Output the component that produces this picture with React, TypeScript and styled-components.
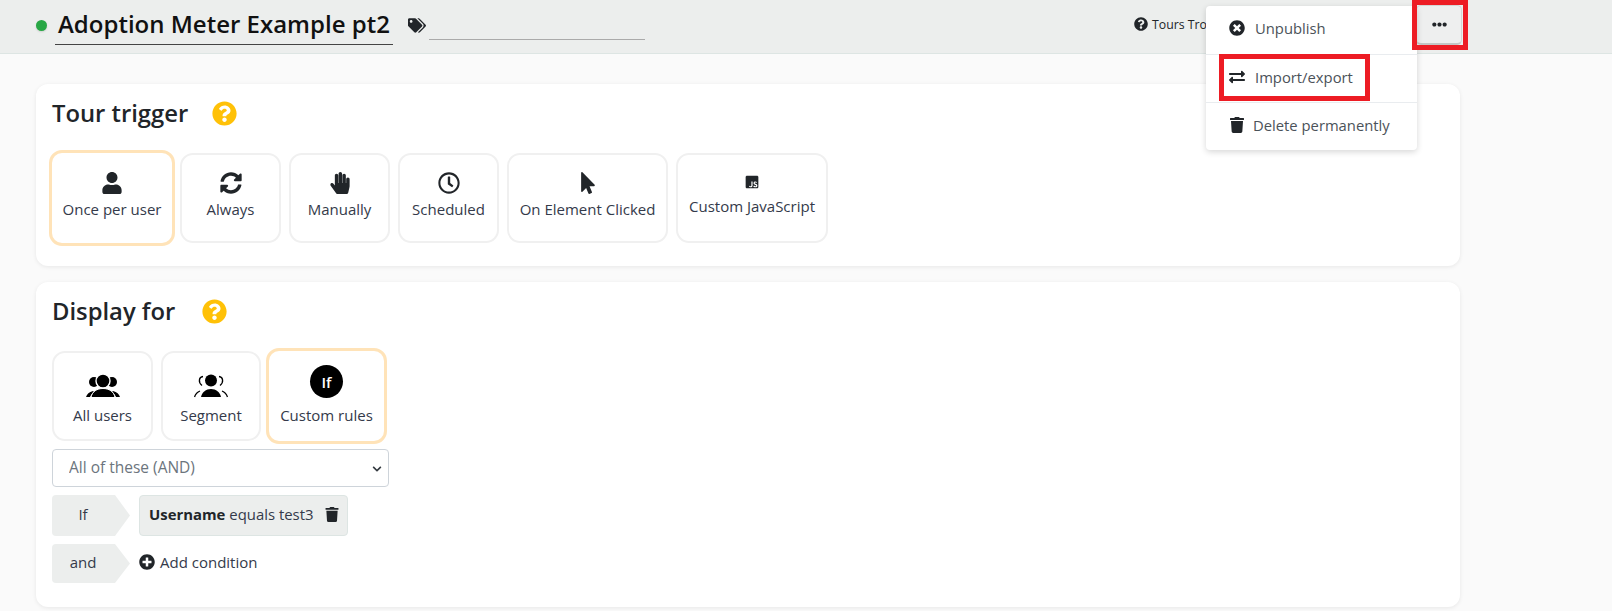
// App.tsx
import React from 'react';
import styled, { createGlobalStyle } from 'styled-components';
import {
  FaChevronDown,
  FaEllipsisH,
  FaExchangeAlt,
  FaHandPaper,
  FaJsSquare,
  FaMousePointer,
  FaPlusCircle,
  FaQuestionCircle,
  FaRegClock,
  FaSyncAlt,
  FaTags,
  FaTimesCircle,
  FaTrash,
  FaUser,
} from 'react-icons/fa';

const GlobalStyle = createGlobalStyle`
  html, body {
    margin: 0;
    padding: 0;
    background: #fafafa;
    font-family: 'Open Sans', 'Noto Sans', sans-serif;
    color: #212529;
    overflow: hidden;
  }
  * {
    box-sizing: border-box;
  }
`;

const Page = styled.div`
  position: relative;
  width: 1612px;
  height: 611px;
  overflow: hidden;
`;

const Header = styled.header`
  display: flex;
  align-items: flex-start;
  height: 54px;
  padding: 6px 150px 0 36px;
  background: #eceeed;
  border-bottom: 1px solid #dde5e3;
`;

const StatusDot = styled.span`
  width: 11px;
  height: 11px;
  margin-top: 14px;
  border-radius: 50%;
  background: #28a745;
  box-shadow: 0 1px 2px rgba(0, 0, 0, 0.12);
`;

const TitleInput = styled.div`
  width: 338px;
  height: 39px;
  margin-left: 8px;
  padding: 0 3px;
  border-bottom: 1px solid #444;
  color: #111;
  font-size: 24px;
  font-weight: 600;
  line-height: 36px;
  white-space: nowrap;
`;

const TagIcon = styled(FaTags)`
  width: 18px;
  height: 15px;
  margin: 12px 0 0 15px;
  color: #212529;
`;

const TagInput = styled.div`
  width: 216px;
  height: 34px;
  margin-left: 3px;
  border-bottom: 1px solid #aaa;
`;

const HelpLink = styled.a`
  display: flex;
  align-items: center;
  gap: 4px;
  width: 282px;
  height: 36px;
  margin-left: auto;
  color: #212529;
  font-size: 12.3px;
  white-space: nowrap;
  svg {
    width: 14px;
    height: 14px;
  }
`;

const MoreButton = styled.button`
  display: flex;
  align-items: center;
  justify-content: center;
  width: 46px;
  height: 40px;
  margin-top: -1px;
  padding: 0;
  border: 1px solid #d4d6d5;
  border-bottom: 2px solid #c4c6c5;
  border-radius: 5px;
  background: #eeefef;
  color: #212529;
  svg {
    width: 15px;
    height: 15px;
  }
`;

const Menu = styled.div`
  position: absolute;
  top: 6px;
  left: 1206px;
  width: 211px;
  height: 144px;
  border-radius: 4px;
  background: #fff;
  box-shadow: 0 2px 6px rgba(0, 0, 0, 0.16);
`;

const MenuItem = styled.div<{ $divider?: boolean; $gap?: number }>`
  display: flex;
  align-items: center;
  gap: ${(p) => p.$gap ?? 10}px;
  height: 48px;
  padding: 0 0 4px 23px;
  border-top: ${(p) => (p.$divider ? '1px solid #e9ecef' : 'none')};
  color: #4b5259;
  font-size: 14.8px;
  white-space: nowrap;
  svg {
    flex: none;
    width: 16px;
    height: 16px;
    color: #212529;
  }
`;

const Highlight = styled.div<{ $top: number; $left: number; $width: number; $height: number }>`
  position: absolute;
  top: ${(p) => p.$top}px;
  left: ${(p) => p.$left}px;
  width: ${(p) => p.$width}px;
  height: ${(p) => p.$height}px;
  border: 5px solid #ed1c24;
  pointer-events: none;
`;

const Main = styled.main`
  display: flex;
  flex-direction: column;
  gap: 16px;
  padding: 30px 152px 0 36px;
`;

const Card = styled.section`
  padding: 16px 16px 20px;
  border-radius: 12px;
  background: #fff;
  box-shadow: 0 1px 4px rgba(0, 0, 0, 0.08);
`;

const CardHeading = styled.div<{ $gap: number }>`
  display: flex;
  align-items: center;
  gap: ${(p) => p.$gap}px;
  height: 26px;
  margin-bottom: 24px;
  color: #212529;
  font-size: 23.8px;
  font-weight: 600;
`;

const HelpIcon = styled(FaQuestionCircle)`
  width: 25px;
  height: 25px;
  color: #ffc107;
`;

const OptionRow = styled.div`
  display: flex;
  align-items: center;
  gap: 8px;
  height: 96px;
`;

const Option = styled.div<{ $width: number; $selected?: boolean }>`
  display: flex;
  flex: none;
  flex-direction: column;
  align-items: center;
  width: ${(p) => p.$width}px;
  height: ${(p) => (p.$selected ? 96 : 90)}px;
  margin: ${(p) => (p.$selected ? '0 -3px' : '0')};
  padding-top: ${(p) => (p.$selected ? 18 : 16)}px;
  border: ${(p) => (p.$selected ? '3px solid #ffe3b8' : '2px solid #f0f0f0')};
  border-radius: 13px;
  background: #fff;
  color: #343a4a;
  font-size: 15px;
  white-space: nowrap;
`;

const IconSlot = styled.div`
  display: flex;
  align-items: center;
  justify-content: center;
  height: 23px;
  margin-bottom: 5px;
  color: #212529;
  svg {
    width: 22px;
    height: 22px;
  }
`;

const AudienceSlot = styled(IconSlot)`
  height: 33px;
  margin-top: 0;
  margin-bottom: 3px;
  color: #000;
  svg {
    width: 34px;
    height: 24px;
  }
`;

const IfBadge = styled.div`
  display: flex;
  align-items: center;
  justify-content: center;
  width: 33px;
  height: 33px;
  margin-bottom: 8px;
  border-radius: 50%;
  background: #000;
  color: #fff;
  font-size: 15px;
  font-weight: 600;
`;

const SelectWrap = styled.div`
  position: relative;
  width: 337px;
  margin-top: 5px;
  svg {
    position: absolute;
    top: 15px;
    right: 7px;
    width: 10px;
    height: 10px;
    color: #343a40;
    pointer-events: none;
  }
`;

const Select = styled.select`
  display: block;
  width: 100%;
  height: 38px;
  padding: 0 16px 2px;
  border: 1px solid #ced4da;
  border-radius: 4px;
  background: #fff;
  color: #6c757d;
  font-family: inherit;
  font-size: 15.5px;
  appearance: none;
`;

const RuleRow = styled.div`
  display: flex;
  align-items: center;
  gap: 9px;
  margin-top: 8px;
`;

const Connector = styled.div<{ $height: number }>`
  display: flex;
  align-items: center;
  justify-content: center;
  width: 78px;
  height: ${(p) => p.$height}px;
  padding: 0 16px 3px 0;
  background: #eceeed;
  border-radius: 4px 0 0 4px;
  clip-path: polygon(0 0, 63px 0, 100% 50%, 63px 100%, 0 100%);
  color: #343a4a;
  font-size: 15px;
`;

const Condition = styled.div`
  display: flex;
  align-items: center;
  justify-content: space-between;
  width: 209px;
  height: 41px;
  padding: 0 8px 3px 9px;
  border: 1px solid #dde5e3;
  border-radius: 4px;
  background: #eceeed;
  color: #343a4a;
  font-size: 14.9px;
  white-space: nowrap;
  b {
    color: #212529;
    font-weight: 700;
  }
  svg {
    flex: none;
    width: 14px;
    height: 15px;
    color: #212529;
  }
`;

const AddCondition = styled.div`
  display: flex;
  align-items: center;
  gap: 5px;
  padding-bottom: 3px;
  color: #343a4a;
  font-size: 15px;
  svg {
    width: 16px;
    height: 16px;
    color: #212529;
  }
`;

const JsIcon = styled(FaJsSquare)`
  margin-top: -2px;
  transform: scale(0.66);
`;

const RaisedLabel = styled.span`
  margin-top: -3px;
`;

const AllUsersIcon = () => (
  <svg viewBox="0 0 34 24" fill="currentColor">
    <circle cx="8" cy="8" r="5" />
    <circle cx="26" cy="8" r="5" />
    <circle cx="17" cy="7" r="7" stroke="#fff" strokeWidth="1.4" />
    <path d="M0 23c1-3 3-5 7-6l1 1c-2 1-3 3-4 5z" />
    <path d="M34 23c-1-3-3-5-7-6l-1 1c2 1 3 3 4 5z" />
    <path d="M5 23.5c1-6 6-9 12-9s11 3 12 9z" stroke="#fff" strokeWidth="1" />
  </svg>
);

const SegmentIcon = () => (
  <svg viewBox="0 0 34 24" fill="currentColor">
    <circle cx="17" cy="6.5" r="6" />
    <path d="M7 23c1-5 5-8 10-8s9 3 10 8z" />
    <path d="M9 2.500C5 3 3.800 8 8 11.500M25 2.500c4 .5 5.200 5.500 1 9" fill="none" stroke="currentColor" strokeWidth="1.3" />
    <path d="M0.500 23c1-3 3-5 5.500-6M33.500 23c-1-3-3-5-5.500-6" fill="none" stroke="currentColor" strokeWidth="1.3" />
  </svg>
);

const triggers = [
  { label: 'Once per user', width: 126, icon: <FaUser />, selected: true },
  { label: 'Always', width: 101, icon: <FaSyncAlt /> },
  { label: 'Manually', width: 101, icon: <FaHandPaper /> },
  { label: 'Scheduled', width: 101, icon: <FaRegClock /> },
  { label: 'On Element Clicked', width: 161, icon: <FaMousePointer /> },
  { label: 'Custom JavaScript', width: 152, icon: <JsIcon />, raised: true },
];

const App: React.FC = () => {
  return (
    <Page>
      <GlobalStyle />
      <Header>
        <StatusDot />
        <TitleInput>Adoption Meter Example pt2</TitleInput>
        <TagIcon />
        <TagInput />
        <HelpLink>
          <FaQuestionCircle />
          Tours Tro
        </HelpLink>
        <MoreButton>
          <FaEllipsisH />
        </MoreButton>
      </Header>

      <Main>
        <Card>
          <CardHeading $gap={24}>
            Tour trigger
            <HelpIcon />
          </CardHeading>
          <OptionRow>
            {triggers.map((t) => (
              <Option key={t.label} $width={t.width} $selected={t.selected}>
                <IconSlot>{t.icon}</IconSlot>
                {t.raised ? <RaisedLabel>{t.label}</RaisedLabel> : t.label}
              </Option>
            ))}
          </OptionRow>
        </Card>

        <Card>
          <CardHeading $gap={27}>
            Display for
            <HelpIcon />
          </CardHeading>
          <OptionRow>
            <Option $width={101}>
              <AudienceSlot>
                <AllUsersIcon />
              </AudienceSlot>
              All users
            </Option>
            <Option $width={100}>
              <AudienceSlot>
                <SegmentIcon />
              </AudienceSlot>
              Segment
            </Option>
            <Option $width={121} $selected>
              <AudienceSlot>
                <IfBadge>If</IfBadge>
              </AudienceSlot>
              Custom rules
            </Option>
          </OptionRow>
          <SelectWrap>
            <Select defaultValue="and">
              <option value="and">All of these (AND)</option>
              <option value="or">Any of these (OR)</option>
            </Select>
            <FaChevronDown />
          </SelectWrap>
          <RuleRow>
            <Connector $height={41}>If</Connector>
            <Condition>
              <span>
                <b>Username</b> equals test3
              </span>
              <FaTrash />
            </Condition>
          </RuleRow>
          <RuleRow>
            <Connector $height={39}>and</Connector>
            <AddCondition>
              <FaPlusCircle />
              Add condition
            </AddCondition>
          </RuleRow>
          <div style={{ height: 4 }} />
        </Card>
      </Main>

      <Menu>
        <MenuItem>
          <FaTimesCircle />
          Unpublish
        </MenuItem>
        <MenuItem $divider>
          <FaExchangeAlt />
          Import/export
        </MenuItem>
        <MenuItem $divider $gap={8}>
          <FaTrash />
          Delete permanently
        </MenuItem>
      </Menu>
      <Highlight $top={0} $left={1412} $width={56} $height={50} />
      <Highlight $top={54} $left={1219} $width={151} $height={47} />
    </Page>
  );
};

export default App;
